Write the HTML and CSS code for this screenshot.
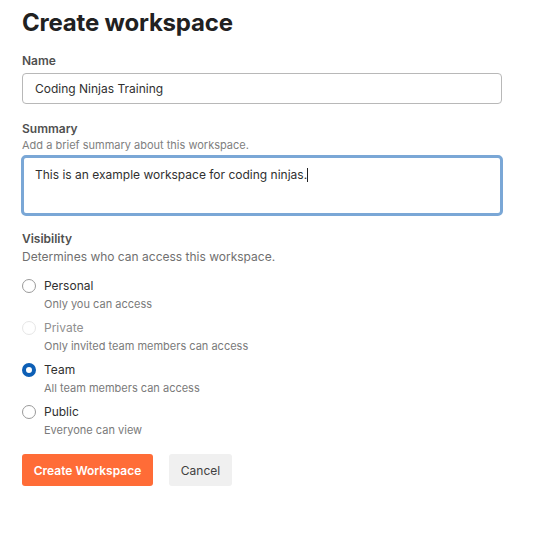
FILE: index.html
```html
<!DOCTYPE html>
<html>
<head>
<meta charset="utf-8">
<link rel="stylesheet" href="styles.css">
</head>
<body>
<div class="page">
  <h1 class="title">Create workspace</h1>

  <div class="field field-name">
    <div class="label">Name</div>
    <div class="input">Coding Ninjas Training</div>
  </div>

  <div class="field field-summary">
    <div class="label">Summary</div>
    <div class="hint">Add a brief summary about this workspace.</div>
    <div class="textarea">This is an example workspace for coding ninjas.<span class="caret"></span></div>
  </div>

  <div class="field field-visibility">
    <div class="label">Visibility</div>
    <div class="hint hint-lg">Determines who can access this workspace.</div>
    <div class="options">
      <div class="option">
        <span class="radio"></span>
        <div class="opt-text">
          <div class="opt-title">Personal</div>
          <div class="opt-desc">Only you can access</div>
        </div>
      </div>
      <div class="option disabled">
        <span class="radio"></span>
        <div class="opt-text">
          <div class="opt-title">Private</div>
          <div class="opt-desc">Only invited team members can access</div>
        </div>
      </div>
      <div class="option">
        <span class="radio checked"></span>
        <div class="opt-text">
          <div class="opt-title">Team</div>
          <div class="opt-desc">All team members can access</div>
        </div>
      </div>
      <div class="option">
        <span class="radio"></span>
        <div class="opt-text">
          <div class="opt-title">Public</div>
          <div class="opt-desc">Everyone can view</div>
        </div>
      </div>
    </div>
  </div>

  <div class="actions">
    <button class="btn btn-primary">Create Workspace</button>
    <button class="btn btn-secondary">Cancel</button>
  </div>
</div>
</body>
</html>
```
FILE: styles.css
```css
* { box-sizing: border-box; }
html, body { margin: 0; padding: 0; background: #fff; }
body { font-family: Inter, "Noto Sans", "Liberation Sans", sans-serif; color: #212121; }
.page { padding: 9px 22px 0 22px; width: 502px; }
.title { margin: 0; font-size: 24px; font-weight: 700; line-height: 28px; color: #212121; letter-spacing: -0.2px; }
.field-name { margin-top: 16px; }
.label { font-size: 12px; font-weight: 600; color: #505050; line-height: 16px; }
.input {
  margin-top: 4px; height: 31px; width: 480px; border: 1px solid #b8b8b8; border-radius: 4px;
  padding: 0 12px; font-size: 12px; line-height: 29px; color: #303030;
}
.field-summary { margin-top: 17px; }
.hint { font-size: 11px; color: #808080; line-height: 14px; margin-top: 1px; }
.textarea {
  margin-top: 3px; height: 61px; width: 482px; margin-left: -1px; border: 3px solid #7aa7d6; border-radius: 5px;
  padding: 8px 11px; font-size: 12px; line-height: 18px; color: #303030;
}
.caret { display: inline-block; width: 1px; height: 14px; background: #222; vertical-align: -3px; }
.field-visibility { margin-top: 15px; }
.hint-lg { font-size: 12px; line-height: 16px; margin-top: 2px; color: #707070; }
.options { margin-top: 13px; display: flex; flex-direction: column; gap: 4px; }
.option { display: flex; align-items: flex-start; gap: 8px; height: 38px; }
.radio {
  width: 14px; height: 14px; border-radius: 50%; border: 1px solid #9a9a9a; margin-top: 1px; flex: none; background: #fff;
}
.radio.checked { border: 4px solid #0d5fb6; background: #fff; }
.option.disabled .radio { border-color: #e6e6e6; }
.opt-title { font-size: 12px; line-height: 16px; color: #303030; }
.option.disabled .opt-title { color: #909090; }
.opt-desc { font-size: 11px; line-height: 14px; color: #7a7a7a; margin-top: 3px; }
.actions { margin-top: 12px; display: flex; gap: 16px; }
.btn { font-family: inherit; border: none; border-radius: 3px; height: 32px; font-size: 12px; padding: 0; white-space: nowrap; cursor: pointer; }
.btn-primary { background: #ff6c37; color: #fff; font-weight: 600; width: 131px; }
.btn-secondary { background: #f0f0f0; color: #404040; width: 63px; }
```
